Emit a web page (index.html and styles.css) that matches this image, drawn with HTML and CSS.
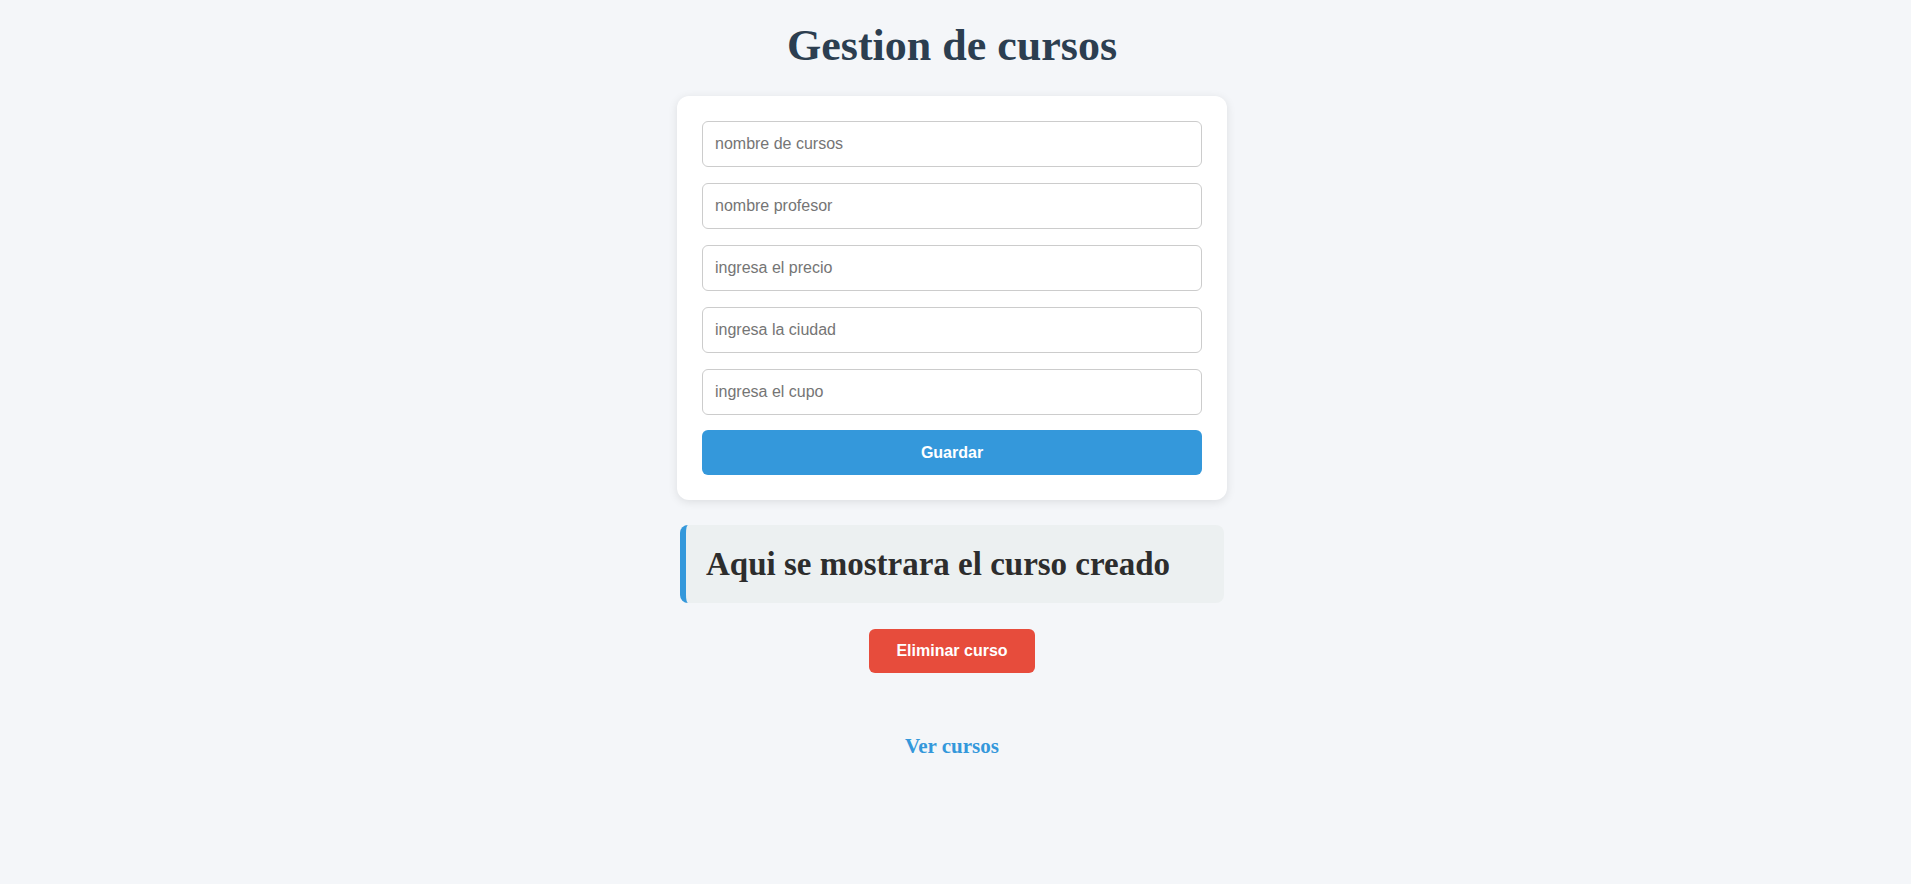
FILE: index.html
```html
<!DOCTYPE html>
<html lang="es">
<head>
<meta charset="utf-8">
<title>Gestion de cursos</title>
<link rel="stylesheet" href="styles.css">
</head>
<body>
<main class="page">
  <h1 class="title">Gestion de cursos</h1>
  <form class="card">
    <input class="field" type="text" placeholder="nombre de cursos">
    <input class="field" type="text" placeholder="nombre profesor">
    <input class="field" type="text" placeholder="ingresa el precio">
    <input class="field" type="text" placeholder="ingresa la ciudad">
    <input class="field" type="text" placeholder="ingresa el cupo">
    <button class="btn btn-save" type="button">Guardar</button>
  </form>
  <section class="result">
    <h2 class="result-text">Aqui se mostrara el curso creado</h2>
  </section>
  <button class="btn btn-delete" type="button">Eliminar curso</button>
  <a class="link" href="#">Ver cursos</a>
</main>
</body>
</html>
```

FILE: styles.css
```css
* {
  box-sizing: border-box;
}

body {
  margin: 0;
  padding: 0 7px 0 0;
  background: #f4f6f9;
  font-family: "Liberation Serif", "DejaVu Serif", serif;
}

.page {
  display: flex;
  flex-direction: column;
  align-items: center;
}

.title {
  margin: 23px 0 0;
  height: 73px;
  font-size: 44px;
  line-height: 46px;
  font-weight: bold;
  color: #2c3e50;
}

.card {
  width: 550px;
  background: #ffffff;
  border-radius: 12px;
  box-shadow: 0 2px 10px rgba(0, 0, 0, 0.1);
  padding: 25px;
  display: flex;
  flex-direction: column;
  gap: 16px;
}

.field {
  height: 46px;
  padding: 0 12px;
  border: 1px solid #cccccc;
  border-radius: 6px;
  font-family: "Liberation Sans", Arial, sans-serif;
  font-size: 16px;
  color: #333;
  background: #fff;
}

.field::placeholder {
  color: #757575;
}

.btn {
  border: none;
  border-radius: 6px;
  color: #ffffff;
  font-family: "Liberation Sans", Arial, sans-serif;
  font-size: 16px;
  font-weight: bold;
  cursor: pointer;
}

.btn-save {
  height: 45px;
  margin-top: -1px;
  background: #3498db;
}

.result {
  width: 544px;
  margin-top: 25px;
  height: 78px;
  background: #ecf0f1;
  border-left: 6px solid #3498db;
  border-radius: 8px;
  padding: 0 20px;
  display: flex;
  align-items: center;
}

.result-text {
  margin: 0;
  font-size: 33px;
  line-height: 34px;
  font-weight: bold;
  color: #2d2d2d;
}

.btn-delete {
  margin-top: 26px;
  height: 44px;
  padding: 0 27px;
  background: #e74c3c;
}

.link {
  margin-top: 61px;
  font-size: 21px;
  font-weight: bold;
  color: #3498db;
  text-decoration: none;
}
```
